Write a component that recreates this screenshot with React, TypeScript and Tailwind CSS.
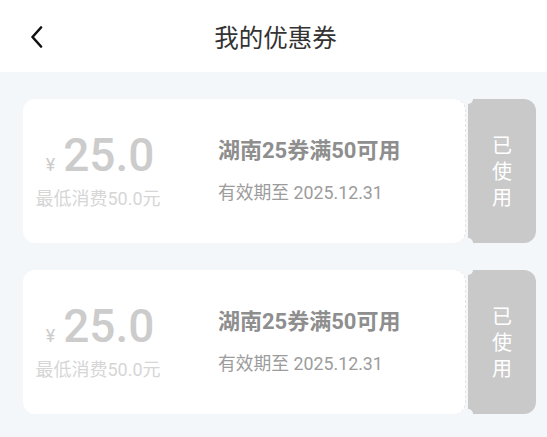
import React from 'react'

type couponType = {
    id: number,
    amount: string,
    minSpend: string,
    title: string,
    expire: string,
}

const coupons: couponType[] = [
    { id: 1, amount: '25.0', minSpend: '最低消费50.0元', title: '湖南25券满50可用', expire: '有效期至 2025.12.31' },
    { id: 2, amount: '25.0', minSpend: '最低消费50.0元', title: '湖南25券满50可用', expire: '有效期至 2025.12.31' },
]

const font = { fontFamily: '"Roboto", "Noto Sans CJK SC", sans-serif' }

const CouponCard = ({ amount, minSpend, title, expire }: couponType) => {
    return (
        <div className="flex h-[144px]">
            <div className="flex-1 flex items-center bg-white rounded-[12px] border-r border-dashed border-[#e6e6e6]">
                <div className="w-[150px] flex flex-col items-center">
                    <div className="flex items-baseline text-[#cccccc] ml-[4px]">
                        <span className="text-[18px] leading-none mr-[8px]">¥</span>
                        <span className="text-[46px] leading-[46px] font-medium">{amount}</span>
                    </div>
                    <div className="text-[18px] leading-[22px] text-[#d6d6d6] mt-[10px]">{minSpend}</div>
                </div>
                <div className="ml-[45px] flex flex-col">
                    <div className="text-[22px] leading-[26px] font-bold text-[#8e8e8e]">{title}</div>
                    <div className="text-[17.8px] leading-[22px] text-[#9c9c9c] mt-[18px]">{expire}</div>
                </div>
            </div>
            <div className="relative w-[68px] ml-[2px] bg-[#c9c9c9] rounded-r-[12px] rounded-l-[4px] flex items-center justify-center">
                <span className="absolute -top-[5px] -left-[5px] w-[10px] h-[10px] rounded-full bg-[#f4f7fa]" />
                <span className="absolute -bottom-[5px] -left-[5px] w-[10px] h-[10px] rounded-full bg-[#f4f7fa]" />
                <div className="flex flex-col items-center text-white text-[20px] leading-[26px] mt-[2px]">
                    <span>已</span>
                    <span>使</span>
                    <span>用</span>
                </div>
            </div>
        </div>
    )
}

export default function App() {
    return (
        <div className="w-[547px] h-[437px] bg-[#f4f7fa] overflow-hidden" style={font}>
            <header className="relative h-[72px] bg-white flex items-center justify-center">
                <button className="absolute left-[26px] top-[25px] w-[22px] h-[24px] flex items-center justify-center">
                    <svg width="14" height="22" viewBox="0 0 14 22" fill="none">
                        <path d="M11 1.5 L2.5 11 L11 20.5" stroke="#111" strokeWidth="2.6" strokeLinecap="round" strokeLinejoin="round" />
                    </svg>
                </button>
                <h1 className="text-[24.5px] leading-[30px] text-[#333333] mt-[5px] ml-[4px]">我的优惠券</h1>
            </header>
            <div className="pl-[23px] pr-[11px] pt-[27px] flex flex-col gap-[27px]">
                {coupons.map((c) => (
                    <CouponCard key={c.id} {...c} />
                ))}
            </div>
        </div>
    )
}
